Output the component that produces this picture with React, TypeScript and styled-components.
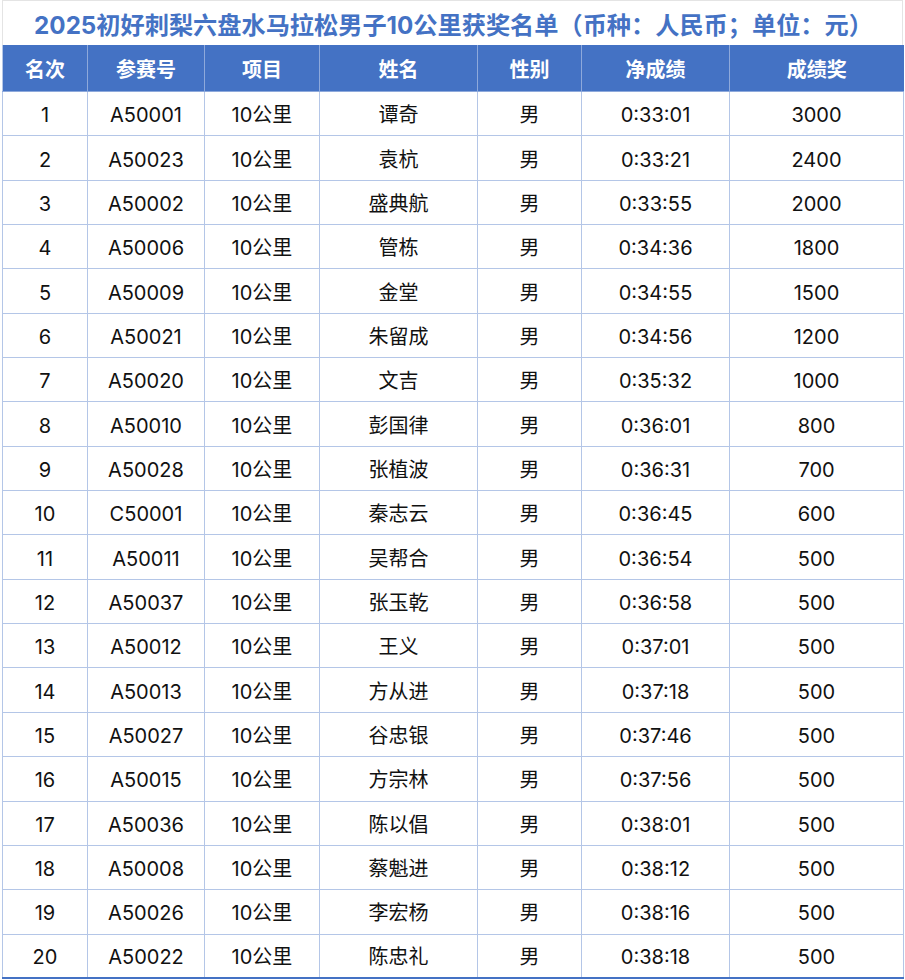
import React from "react";
import styled, { createGlobalStyle } from "styled-components";

const Global = createGlobalStyle`
  html, body { margin: 0; padding: 0; background: #ffffff; }
  body { font-family: Inter, "Noto Sans CJK SC", sans-serif; }
`;

const Page = styled.div`
  width: 905px;
  padding: 0 2px 0 2px;
  box-sizing: border-box;
`;

const Title = styled.div`
  height: 45px;
  box-sizing: border-box;
  border-top: 1px solid #e4e4e4;
  border-left: 1px solid #e4e4e4;
  border-right: 1px solid #e4e4e4;
  display: flex;
  align-items: center;
  justify-content: center;
  color: #4472c4;
  font-weight: 700;
  font-size: 24.2px;
  padding-left: 2px;
`;

const Table = styled.table`
  width: 901px;
  border-collapse: collapse;
  table-layout: fixed;
  border-bottom: 2px solid #4472c4;
  border-left: 1px solid #b4c6e7;
`;

const HeadCell = styled.th`
  background: #4472c4;
  color: #ffffff;
  font-weight: 700;
  font-size: 20px;
  height: 45px;
  padding: 1px 0 0 0;
  text-align: center;
  border-left: 1px solid #8ea9db;
  border-bottom: 1px solid #8ea9db;
  &:first-child { border-left: none; }
`;

const Row = styled.tr`
  height: 44.35px;
`;

const Cell = styled.td`
  padding: 3px 0 0 0;
  line-height: 24px;
  text-align: center;
  font-size: 20px;
  color: #111111;
  border-left: 1px solid #b4c6e7;
  border-bottom: 1px solid #b4c6e7;
  border-right: 1px solid #b4c6e7;
`;

const widths = [85, 117, 115, 158, 104, 148, 174];
const headers = ["名次", "参赛号", "项目", "姓名", "性别", "净成绩", "成绩奖"];

const data: [string, string, string, string][] = [
  ["A50001", "谭奇", "0:33:01", "3000"],
  ["A50023", "袁杭", "0:33:21", "2400"],
  ["A50002", "盛典航", "0:33:55", "2000"],
  ["A50006", "管栋", "0:34:36", "1800"],
  ["A50009", "金堂", "0:34:55", "1500"],
  ["A50021", "朱留成", "0:34:56", "1200"],
  ["A50020", "文吉", "0:35:32", "1000"],
  ["A50010", "彭国律", "0:36:01", "800"],
  ["A50028", "张植波", "0:36:31", "700"],
  ["C50001", "秦志云", "0:36:45", "600"],
  ["A50011", "吴帮合", "0:36:54", "500"],
  ["A50037", "张玉乾", "0:36:58", "500"],
  ["A50012", "王义", "0:37:01", "500"],
  ["A50013", "方从进", "0:37:18", "500"],
  ["A50027", "谷忠银", "0:37:46", "500"],
  ["A50015", "方宗林", "0:37:56", "500"],
  ["A50036", "陈以倡", "0:38:01", "500"],
  ["A50008", "蔡魁进", "0:38:12", "500"],
  ["A50026", "李宏杨", "0:38:16", "500"],
  ["A50022", "陈忠礼", "0:38:18", "500"],
];

export default function App() {
  return (
    <Page>
      <Global />
      <Title>2025初好刺梨六盘水马拉松男子10公里获奖名单（币种：人民币；单位：元）</Title>
      <Table>
        <colgroup>
          {widths.map((w, i) => (
            <col key={i} style={{ width: w }} />
          ))}
        </colgroup>
        <thead>
          <tr>
            {headers.map((h) => (
              <HeadCell key={h}>{h}</HeadCell>
            ))}
          </tr>
        </thead>
        <tbody>
          {data.map((d, i) => (
            <Row key={d[0]}>
              <Cell>{i + 1}</Cell>
              <Cell>{d[0]}</Cell>
              <Cell>10公里</Cell>
              <Cell>{d[1]}</Cell>
              <Cell>男</Cell>
              <Cell>{d[2]}</Cell>
              <Cell>{d[3]}</Cell>
            </Row>
          ))}
        </tbody>
      </Table>
    </Page>
  );
}
